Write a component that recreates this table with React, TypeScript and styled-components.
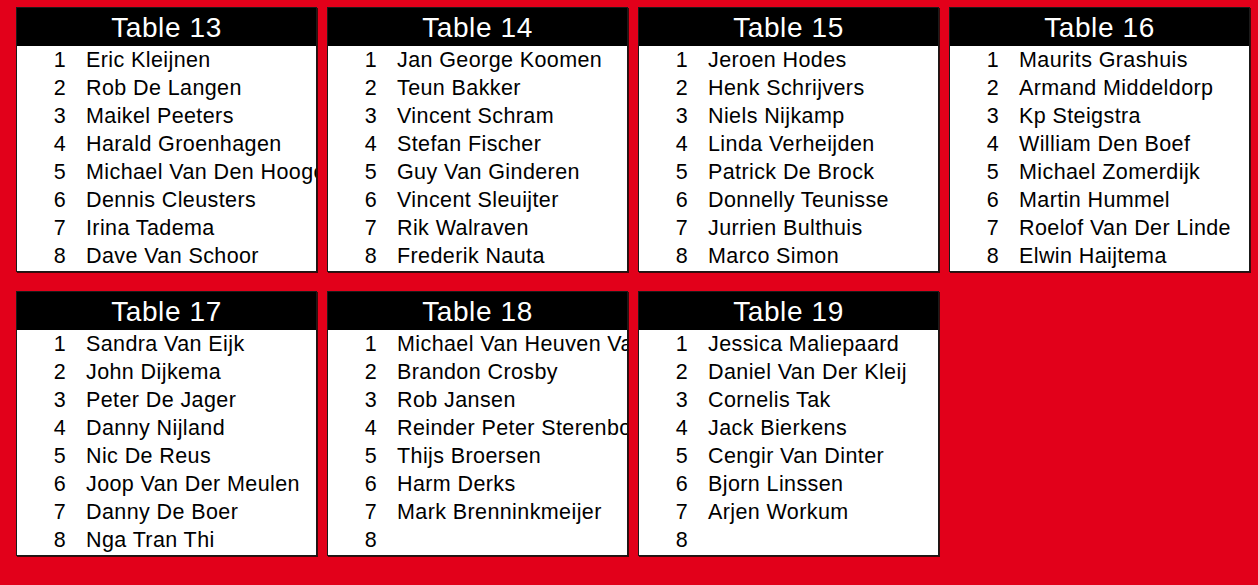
import React from "react";
import styled, { createGlobalStyle } from "styled-components";

const Global = createGlobalStyle`
  html, body { margin: 0; padding: 0; background: #e2001a; }
  body { font-family: Arial, "Liberation Sans", sans-serif; }
`;

const Page = styled.div`
  width: 1258px;
  height: 585px;
  background: #e2001a;
  box-sizing: border-box;
  padding: 7px 8px 0 16px;
  display: grid;
  grid-template-columns: repeat(4, 301px);
  grid-auto-rows: 265px;
  column-gap: 10px;
  row-gap: 19px;
  overflow: hidden;
`;

const Card = styled.div`
  background: #fff;
  border: 1px solid #1a1a1a;
  box-shadow: 1px 1px 0 #3a0a0a;
  display: flex;
  flex-direction: column;
  overflow: hidden;
`;

const Header = styled.div`
  background: #000;
  color: #fff;
  height: 38px;
  display: flex;
  align-items: center;
  justify-content: center;
  font-size: 28px;
  letter-spacing: 0.6px;
  line-height: 1;
  padding-top: 1px;
  box-sizing: border-box;
`;

const Row = styled.div`
  height: 28px;
  display: flex;
  align-items: center;
  font-size: 21.5px;
  letter-spacing: 0.4px;
  color: #000;
  white-space: nowrap;
`;

const Num = styled.span`
  width: 49px;
  text-align: right;
  flex: none;
`;

const Name = styled.span`
  margin-left: 20px;
`;

const tables: { n: number; names: string[] }[] = [
  { n: 13, names: ["Eric Kleijnen", "Rob De Langen", "Maikel Peeters", "Harald Groenhagen", "Michael Van Den Hoogen", "Dennis Cleusters", "Irina Tadema", "Dave Van Schoor"] },
  { n: 14, names: ["Jan George Koomen", "Teun Bakker", "Vincent Schram", "Stefan Fischer", "Guy Van Ginderen", "Vincent Sleuijter", "Rik Walraven", "Frederik Nauta"] },
  { n: 15, names: ["Jeroen Hodes", "Henk Schrijvers", "Niels Nijkamp", "Linda Verheijden", "Patrick De Brock", "Donnelly Teunisse", "Jurrien Bulthuis", "Marco Simon"] },
  { n: 16, names: ["Maurits Grashuis", "Armand Middeldorp", "Kp Steigstra", "William Den Boef", "Michael Zomerdijk", "Martin Hummel", "Roelof Van Der Linde", "Elwin Haijtema"] },
  { n: 17, names: ["Sandra Van Eijk", "John Dijkema", "Peter De Jager", "Danny Nijland", "Nic De Reus", "Joop Van Der Meulen", "Danny De Boer", "Nga Tran Thi"] },
  { n: 18, names: ["Michael Van Heuven Van", "Brandon Crosby", "Rob Jansen", "Reinder Peter Sterenborg", "Thijs Broersen", "Harm Derks", "Mark Brenninkmeijer", ""] },
  { n: 19, names: ["Jessica Maliepaard", "Daniel Van Der Kleij", "Cornelis Tak", "Jack Bierkens", "Cengir Van Dinter", "Bjorn Linssen", "Arjen Workum", ""] },
];

export default function App() {
  return (
    <>
      <Global />
      <Page>
        {tables.map((t) => (
          <Card key={t.n}>
            <Header>Table {t.n}</Header>
            {t.names.map((name, i) => (
              <Row key={i}>
                <Num>{i + 1}</Num>
                <Name>{name}</Name>
              </Row>
            ))}
          </Card>
        ))}
      </Page>
    </>
  );
}
